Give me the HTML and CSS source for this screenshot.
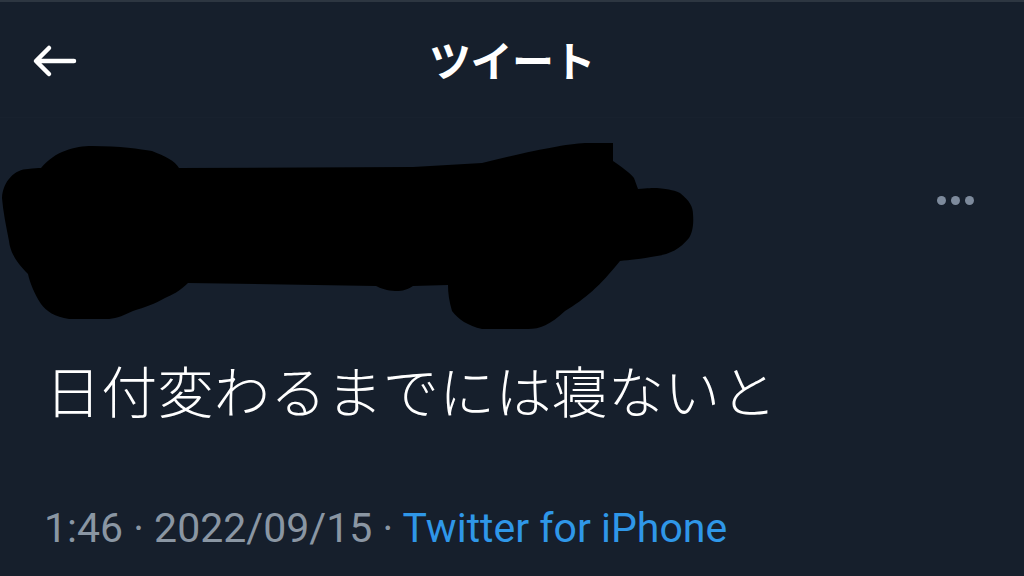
FILE: index.html
```html
<!DOCTYPE html>
<html lang="ja">
<head>
<meta charset="utf-8">
<link rel="stylesheet" href="styles.css">
</head>
<body>
<div class="app">
  <header class="topbar">
    <svg class="back" width="48" height="36" viewBox="0 0 48 36" aria-hidden="true">
      <path d="M44 18H7 M19 5L6 18L19 31" fill="none" stroke="#ffffff" stroke-width="4.5" stroke-linecap="round" stroke-linejoin="round"/>
    </svg>
    <h1 class="title">ツイート</h1>
  </header>
  <section class="user-row">
    <svg class="redact" width="700" height="210" viewBox="0 130 700 210" aria-hidden="true">
      <path fill="#000000" d="M41 167 C55 150 75 145 92 145 C120 145 140 148 152 150 C165 155 175 160 179 167 L413 166 L482 162 C530 150 570 142 588 142 L613 142 L613 160 C622 166 630 172 634 177 L638 188 C648 187 652 187 657 187 C670 188 676 190 680 192 C690 200 693 206 693 213 C694 225 692 232 689 237 C680 248 670 253 657 255 C640 258 630 259 620 260 C600 285 585 298 565 310 C550 324 540 328 528 328 L482 328 C468 325 458 318 452 310 C449 300 448 292 448 284 L413 285 C405 290 400 290 395 290 C388 290 380 287 376 285 L188 282 C180 290 172 294 165 297 C155 303 145 306 133 310 C120 316 115 318 106 318 L69 318 C55 316 46 310 41 303 C34 292 30 282 28 273 C15 260 10 250 9 240 C6 225 3 210 2 197 C3 180 15 168 28 168 C34 167 38 167 41 167 Z"/>
    </svg>
    <div class="more" aria-label="more">
      <span class="dot"></span><span class="dot"></span><span class="dot"></span>
    </div>
  </section>
  <p class="tweet">日付変わるまでには寝ないと</p>
  <p class="meta"><span class="time">1:46 · 2022/09/15 · </span><span class="source">Twitter for iPhone</span></p>
</div>
</body>
</html>
```
FILE: styles.css
```css
html, body {
  margin: 0;
  padding: 0;
  background: #161f2c;
}
.app {
  width: 1024px;
  height: 576px;
  overflow: hidden;
  border-top: 2px solid #2d3641;
  box-sizing: border-box;
  font-family: "Noto Sans CJK JP", "Noto Sans", sans-serif;
  color: #ffffff;
}
.topbar {
  position: relative;
  height: 115px;
  display: flex;
  align-items: center;
  justify-content: center;
  border-bottom: 1px solid #18212e;
}
.back {
  position: absolute;
  left: 30px;
  top: 41px;
}
.title {
  margin: 0;
  font-size: 42px;
  font-weight: 700;
  letter-spacing: -0.5px;
  line-height: 1;
  margin-top: -2px;
}
.user-row {
  display: flex;
  justify-content: space-between;
  align-items: flex-start;
  height: 226px;
}
.redact {
  display: block;
  margin-top: 13px;
}
.more {
  display: flex;
  gap: 5px;
  margin-top: 78px;
  margin-right: 50px;
}
.dot {
  width: 9px;
  height: 9px;
  border-radius: 50%;
  background: #7d8a9c;
}
.tweet {
  margin: 0;
  padding-left: 45px;
  font-size: 56px;
  font-weight: 300;
  line-height: 72px;
  letter-spacing: 0.3px;
  margin-top: 9px;
}
.meta {
  margin: 0;
  padding-left: 44px;
  margin-top: 73px;
  font-family: "Roboto", "Liberation Sans", sans-serif;
  font-size: 41px;
  line-height: 60px;
}
.time {
  color: #8a96a3;
}
.source {
  color: #2f97e8;
}
```
